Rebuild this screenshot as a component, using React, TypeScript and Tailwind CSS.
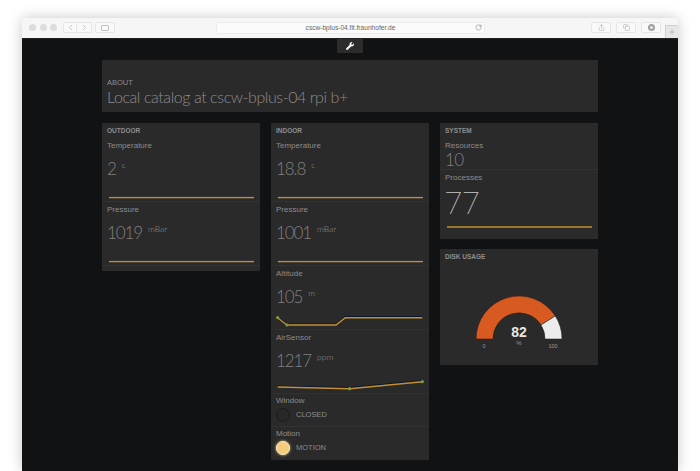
import { ChevronLeft, ChevronRight, Copy, Plus, RotateCw, Share } from "lucide-react";
import { FaWrench } from "react-icons/fa";

interface ChartProps {
  points: number[][];
  dots?: number[][];
}

const Spark: React.FC<ChartProps> = ({ points, dots }) => {
  const line = points.map((p) => `${p[0]},${p[1]}`).join(" ");
  const shadow = points.map((p) => `${p[0]},${p[1] - 1}`).join(" ");
  return (
    <svg viewBox="0 0 158 21" className="block shrink-0 w-[158px] h-[21px]">
      <polyline points={shadow} fill="none" stroke="#0b1530" strokeWidth="1.2" />
      <polyline points={line} fill="none" stroke="#c4902f" strokeWidth="1.4" />
      {dots?.map((p) => <circle key={p[0]} cx={p[0]} cy={p[1]} r="1.6" fill="#7e9c3c" />)}
    </svg>
  );
};

const flat = [
  [7, 17.5],
  [152, 17.5],
];

interface MetricProps {
  label: string;
  value: string;
  unit: string;
  points?: number[][];
  dots?: number[][];
}

const Metric: React.FC<MetricProps> = ({ label, value, unit, points = flat, dots }) => (
  <div className="h-16 border-b border-[#323232] flex flex-col">
    <div className="pl-[5px] pt-[2px] h-[14px] text-[8px] leading-[12px] text-[#8c8c8c]">{label}</div>
    <div className="pl-[5px] pt-[2px] h-[28px] flex items-center font-['Lato',sans-serif] font-light text-[#808080]">
      <span className="text-[17px] leading-[24px] tracking-[-1.1px] pt-[4px]">{value}</span>
      <span className="ml-[6px] mb-[5px] text-[8.5px] leading-[10px] text-[#969696]">{unit}</span>
    </div>
    <Spark points={points} dots={dots} />
  </div>
);

const Card: React.FC<{ title: string; children?: React.ReactNode; className?: string }> = ({
  title,
  children,
  className,
}) => (
  <div className={`bg-[#2a2a2a] ${className ?? ""}`}>
    <div className="h-[15px] pl-[5px] pt-[4px] text-[6.5px] leading-[8px] font-bold text-[#8e8e8e]">{title}</div>
    {children}
  </div>
);

const ToolButton: React.FC<{ children: React.ReactNode; className?: string }> = ({ children, className }) => (
  <div
    className={`h-[11px] flex items-center justify-center border border-[#e6e6e6] rounded-[2px] bg-[#f9f9f9] text-[#b4b4b4] ${className ?? ""}`}
  >
    {children}
  </div>
);

const Toggle: React.FC<{ label: string; state: string; on?: boolean }> = ({ label, state, on }) => (
  <div className="h-[33px] border-b border-[#323232] last:border-b-0">
    <div className="pl-[5px] pt-[2px] h-[14px] text-[8px] leading-[10px] text-[#8c8c8c]">{label}</div>
    <div className="pl-[5px] flex items-center gap-[6px]">
      <div
        className={
          on
            ? "w-[14px] h-[14px] rounded-full bg-[#f3cd7c] border border-[#fbeecb] shadow-[0_0_3px_#f3cd7c]"
            : "w-[14px] h-[14px] rounded-full bg-[#282828] border border-[#1c1c1c]"
        }
      />
      <span className="text-[7.5px] text-[#8c8c8c]">{state}</span>
    </div>
  </div>
);

export default function App() {
  return (
    <div className="w-[700px] h-[471px] overflow-hidden bg-white pt-[18px] px-[22px] font-['Liberation_Sans',sans-serif]">
      <div className="h-[453px] rounded-t-[4px] shadow-[0_0_14px_rgba(0,0,0,0.22)] overflow-hidden">
        {/* Browser toolbar */}
        <div className="relative h-[21px] bg-[#f6f6f6] border-b border-[#222] flex items-center pl-[6px] pb-[1px]">
          <div className="flex gap-[3.5px] ml-[1px]">
            <div className="w-[7px] h-[7px] rounded-full bg-[#dcdcdc]" />
            <div className="w-[7px] h-[7px] rounded-full bg-[#dcdcdc]" />
            <div className="w-[7px] h-[7px] rounded-full bg-[#dcdcdc]" />
          </div>
          <div className="ml-[6px] flex">
            <ToolButton className="w-[14px] rounded-r-none">
              <ChevronLeft size={9} />
            </ToolButton>
            <ToolButton className="w-[15px] rounded-l-none border-l-0">
              <ChevronRight size={9} />
            </ToolButton>
          </div>
          <ToolButton className="w-[20px] ml-[3px]">
            <div className="w-[8px] h-[6px] border border-[#c0c0c0] rounded-[1px]" />
          </ToolButton>
          <div className="relative ml-[101px] w-[269px] h-[12px] bg-[#fbfbfb] border border-[#ebebeb] rounded-[2px] flex items-center justify-center text-[6.6px] text-[#666]">
            cscw-bplus-04.fit.fraunhofer.de
            <RotateCw size={7} className="absolute right-[2px] top-[1.5px] text-[#888]" />
          </div>
          <div className="ml-[106px] flex gap-[5px]">
            <ToolButton className="w-[20px]">
              <Share size={7} />
            </ToolButton>
            <ToolButton className="w-[20px]">
              <Copy size={7} />
            </ToolButton>
            <ToolButton className="w-[20px]">
              <div className="w-[7px] h-[7px] rounded-full bg-[#a0a0a0] flex items-center justify-center">
                <div className="w-[3px] h-[3px] rounded-full bg-[#e8e8e8]" />
              </div>
            </ToolButton>
          </div>
          <div className="absolute right-0 bottom-0 w-[13px] h-[13px] bg-[#e6e6e6] border-l border-t border-[#d0d0d0] flex items-center justify-center text-[#aaa]">
            <Plus size={8} />
          </div>
        </div>

        {/* Dashboard */}
        <div className="h-[432px] bg-[#111214]">
          <div className="flex justify-center">
            <div className="w-[26px] h-[14px] bg-[#2c2c2c] flex items-center justify-center text-white">
              <FaWrench size={8} />
            </div>
          </div>
          <div className="w-[496px] mx-auto mt-[7px] h-[52px] bg-[#2a2a2a] pl-[5px] pt-[18px]">
            <div className="text-[7.5px] leading-[9px] text-[#8c8c8c]">ABOUT</div>
            <div className="font-['Lato',sans-serif] font-light text-[16px] leading-[19px] tracking-[-0.42px] text-[#8c8c8c]">
              Local catalog at cscw-bplus-04 rpi b+
            </div>
          </div>

          <div className="w-[496px] mx-auto mt-[11px] grid grid-cols-[158px_158px_158px] gap-x-[11px] items-start">
            <Card title="OUTDOOR" className="pb-[5px]">
              <Metric label="Temperature" value="2" unit="c" />
              <Metric label="Pressure" value="1019" unit="mBar" />
            </Card>

            <Card title="INDOOR">
              <Metric label="Temperature" value="18.8" unit="c" />
              <Metric label="Pressure" value="1001" unit="mBar" />
              <Metric
                label="Altitude"
                value="105"
                unit="m"
                points={[
                  [6.7, 9.7],
                  [16, 17],
                  [65, 17],
                  [74.3, 9.7],
                  [151.3, 9.7],
                ]}
                dots={[
                  [6.7, 9.7],
                  [16, 17],
                ]}
              />
              <Metric
                label="AirSensor"
                value="1217"
                unit="ppm"
                points={[
                  [6.7, 15],
                  [78.7, 16.7],
                  [151.3, 9.7],
                ]}
                dots={[
                  [78.7, 16.7],
                  [151.3, 9.7],
                ]}
              />
              <Toggle label="Window" state="CLOSED" />
              <Toggle label="Motion" state="MOTION" on />
            </Card>

            <div className="flex flex-col gap-[10px]">
              <Card title="SYSTEM" className="h-[116px]">
                <div className="h-[32px] border-b border-[#323232]">
                  <div className="pl-[5px] pt-[3px] h-[14px] text-[8px] leading-[10px] text-[#8c8c8c]">Resources</div>
                  <div className="pl-[5px] font-['Lato',sans-serif] font-light text-[17px] leading-[16px] tracking-[-0.5px] text-[#808080]">
                    10
                  </div>
                </div>
                <div className="pl-[5px] pt-[3px] h-[14px] text-[8px] leading-[10px] text-[#8c8c8c]">Processes</div>
                <div className="pl-[5px] pt-[3px] h-[37px] font-['Roboto',sans-serif] font-thin text-[32px] leading-[32px] text-[#c8c8c8]">
                  77
                </div>
                <svg viewBox="0 0 158 8" className="block w-[158px] h-[8px]">
                  <line x1="7" y1="6" x2="152" y2="6" stroke="#c4902f" strokeWidth="1.4" />
                </svg>
              </Card>

              <Card title="DISK USAGE" className="h-[116px]">
                <svg viewBox="0 0 158 101" className="block w-[158px] h-[101px]">
                  <path d="M36 75 A43 43 0 0 1 115.3 52 L101 61 A26 26 0 0 0 53 75 Z" fill="#d95a20" stroke="#1a1a1a" strokeWidth="0.5" />
                  <path d="M115.3 52 A43 43 0 0 1 122 75 L105 75 A26 26 0 0 0 101 61 Z" fill="#ececec" stroke="#1a1a1a" strokeWidth="0.5" />
                  <text x="79" y="73" textAnchor="middle" fontSize="14" fontWeight="700" fill="#e6e6e6">
                    82
                  </text>
                  <text x="79" y="81" textAnchor="middle" fontSize="6" fill="#9a9a9a">
                    %
                  </text>
                  <text x="44" y="84" textAnchor="middle" fontSize="5.5" fill="#9a9a9a">
                    0
                  </text>
                  <text x="113" y="84" textAnchor="middle" fontSize="5.5" fill="#9a9a9a">
                    100
                  </text>
                </svg>
              </Card>
            </div>
          </div>
        </div>
      </div>
    </div>
  );
}
